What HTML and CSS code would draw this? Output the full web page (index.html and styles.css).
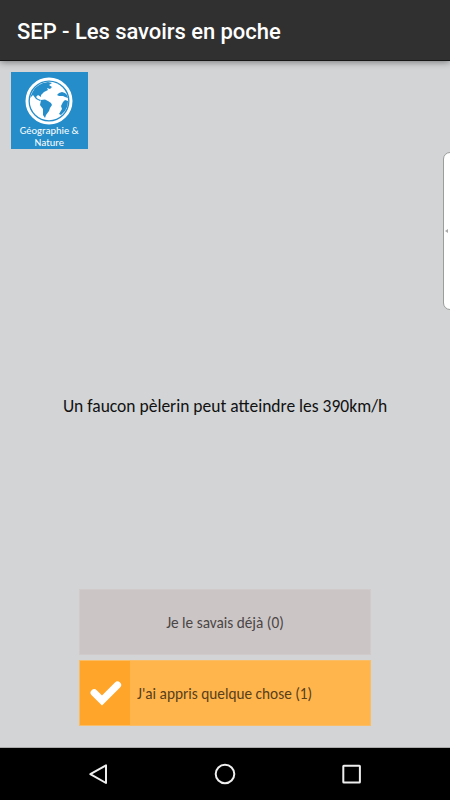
FILE: index.html
```html
<!DOCTYPE html>
<html lang="fr">
<head>
<meta charset="utf-8">
<title>SEP - Les savoirs en poche</title>
<link rel="stylesheet" href="styles.css">
</head>
<body>
<div class="app">
  <header class="bar"><h1>SEP - Les savoirs en poche</h1></header>
  <main class="content">
    <section class="category">
      <svg class="globe" viewBox="0 0 48 48">
        <circle cx="24" cy="24" r="22" fill="none" stroke="#fff" stroke-width="3"/>
        <circle cx="24" cy="24" r="19.2" fill="#fff"/>
        <g fill="#258dc9">
          <path d="M7 16 L10 11 L14 8 L18 6 L23 5 L27 6 L24 8 L27 10 L25 12 L22 11 L23 13 L19 15 L16 18 L16 20 L13 18 L11 20 L13 22 L16 23 L15 24 L11 22 L8 18 L5 21 Z"/>
          <path d="M16 23 L20 22.5 L23 24 L26 26 L27 28 L25 31 L24 34 L21 38 L20 41 L18 38 L18 32 L15 28 Z"/>
          <path d="M34 16 L37 15 L40 16 L42 18 L43 21 L40 20 L38 19 L34 19 L32 18 Z"/>
          <path d="M38 25 L40 23 L43 24 L42.5 29 L40 34 L36 38 L34 37 L37 32 L36 29 Z"/>
        </g>
      </svg>
      <span class="label">Géographie &amp;</span>
      <span class="label">Nature</span>
    </section>
    <aside class="drawer"><i class="handle"></i></aside>
    <p class="fact"><span>Un faucon pèlerin peut atteindre les 390km/h</span></p>
    <div class="answers">
      <button class="answer known"><span>Je le savais déjà (0)</span></button>
      <button class="answer learned">
        <span class="check"><svg viewBox="0 0 32 28"><path d="M4.2 13.7 L12 21.5 L27.5 6" fill="none" stroke="#fff" stroke-width="7.2" stroke-linecap="round"/></svg></span>
        <span class="text">J'ai appris quelque chose (1)</span>
      </button>
    </div>
  </main>
  <nav class="nav">
    <svg viewBox="0 0 24 24"><path d="M20 3.3 V21 L4.3 12.2 Z"/></svg>
    <svg viewBox="0 0 24 24"><circle cx="12" cy="12" r="9.3"/></svg>
    <svg viewBox="0 0 24 24"><rect x="3.3" y="3.8" width="16.6" height="16.6" rx=".5"/></svg>
  </nav>
</div>
</body>
</html>
```
FILE: styles.css
```css
* { box-sizing: border-box; }
body { margin: 0; font-family: Carlito, Lato, sans-serif; }
.app { width: 450px; height: 800px; display: flex; flex-direction: column; background: #d2d4d6; overflow: hidden; }
.bar { height: 61px; flex: none; background: #303030; border-bottom: 1px solid #161616; box-shadow: 0 1px 7px rgba(0,0,0,.45); padding: 19px 0 0 17px; z-index: 1; }
.bar h1 { margin: 0; font: 500 22px/26px Roboto, sans-serif; letter-spacing: -.05px; color: #fff; white-space: nowrap; }
.content { position: relative; flex: 1; display: flex; flex-direction: column; border-bottom: 1px solid #aaa; }
.category { width: 76.5px; height: 77px; margin: 11px 0 0 11px; background: #258dc9; color: #fff; display: flex; flex-direction: column; align-items: center; padding-top: 5px; }
.globe { width: 48px; height: 48px; flex: none; }
.label { font-size: 10.5px; line-height: 12px; white-space: nowrap; }
.drawer { position: absolute; right: -10px; top: 91px; width: 17px; height: 158px; background: #fff; border: 1px solid #9b9d9b; border-radius: 7px; padding: 76px 0 0 1px; }
.handle { display: block; width: 0; height: 0; border: 2px solid transparent; border-left: 0; border-right: 3px solid #aaa; }
.fact { margin: 246px 0 0; height: 22px; line-height: 22px; font-size: 17.5px; color: #111; text-align: center; white-space: nowrap; }
.answers { margin: 172px 0 0 79px; width: 292px; display: grid; gap: 5px; }
.answer { height: 66px; border: 1px solid #d0cbca; padding: 0; font: 15.3px/20px Carlito, Lato, sans-serif; color: #4b4646; background: #cbc5c5; white-space: nowrap; }
.known { padding-top: 2px; }
.learned { display: flex; align-items: center; background: #ffb54c; border-color: #f9bd68; color: #59401b; }
.check { width: 50px; height: 64px; background: #ffa529; display: flex; align-items: center; justify-content: center; padding-left: 2px; }
.check svg { width: 32px; height: 28px; }
.text { margin-left: 7px; padding-top: 2px; }
.nav { height: 52px; flex: none; background: #000; display: flex; justify-content: space-between; align-items: center; padding: 0 86px; }
.nav svg { width: 24px; height: 24px; fill: none; stroke: #eee; stroke-width: 2; stroke-linejoin: round; }
```
